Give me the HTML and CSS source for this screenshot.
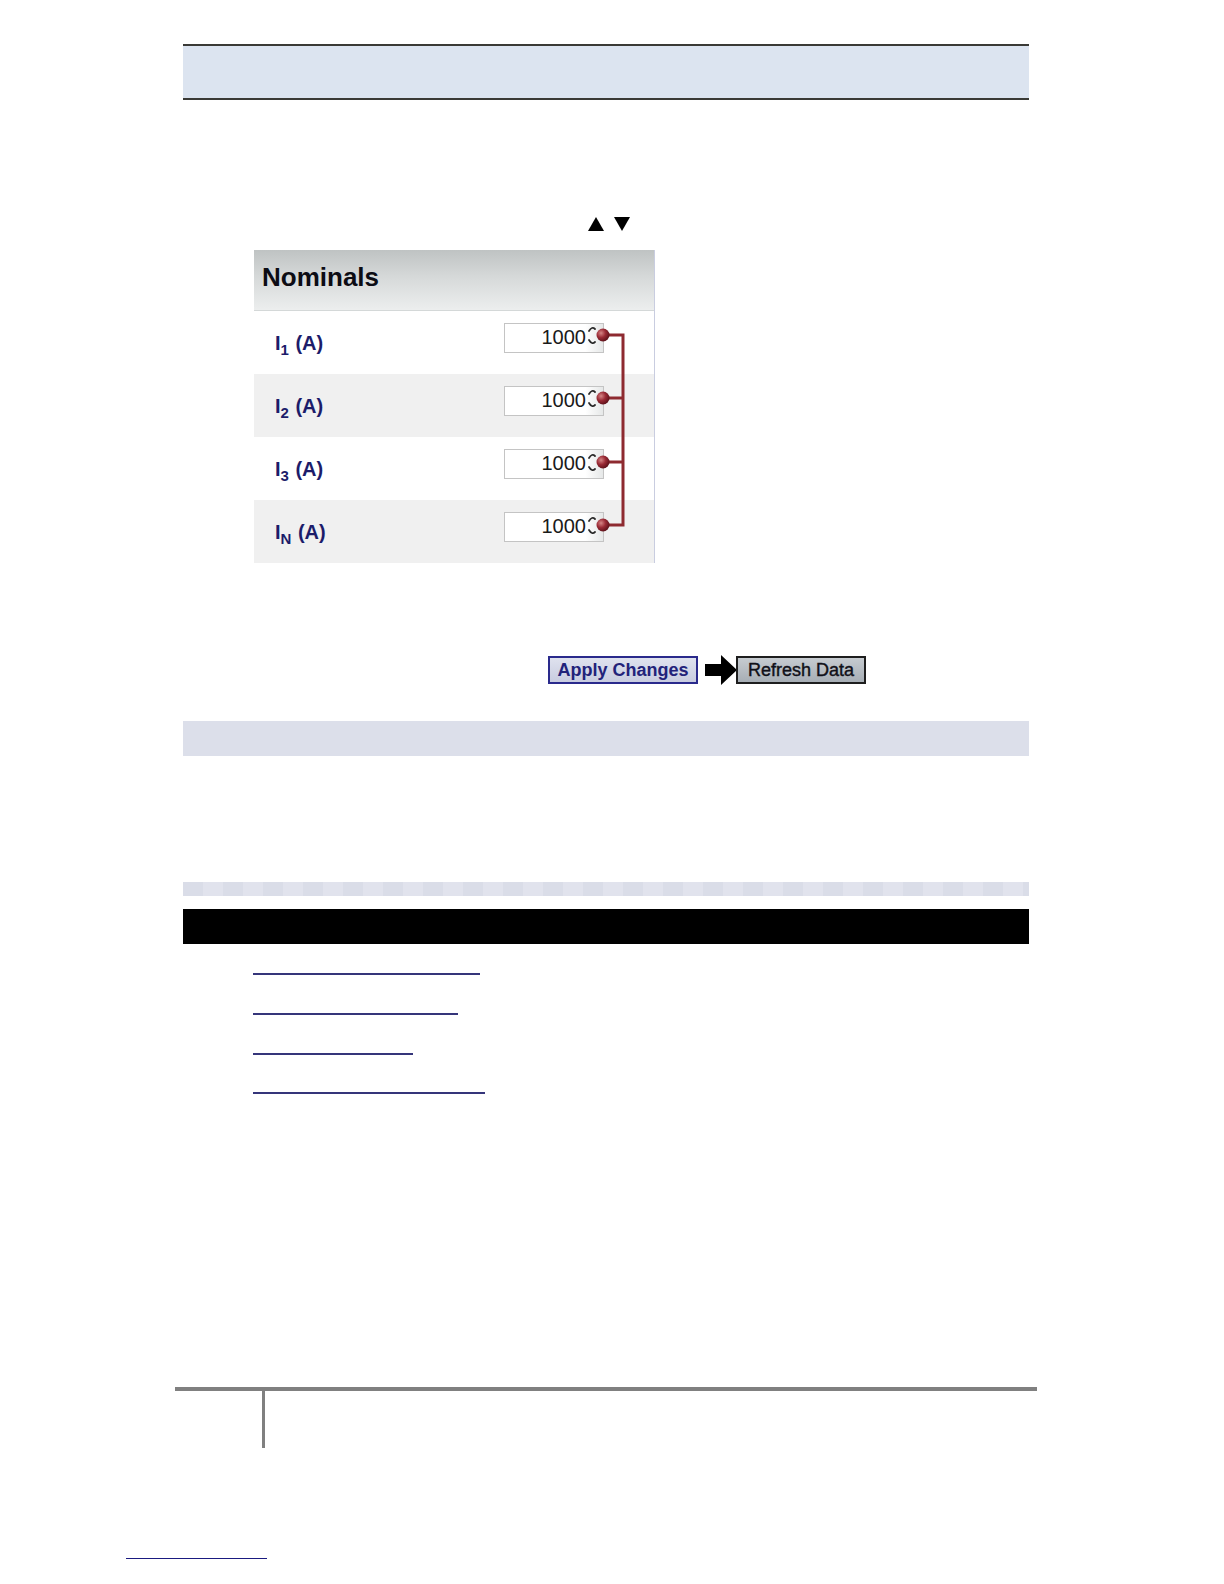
FILE: index.html
```html
<!DOCTYPE html>
<html>
<head>
<meta charset="utf-8">
<link rel="stylesheet" href="styles.css">
</head>
<body>
<div class="page">
  <div class="topbar"></div>
  <div class="sortrow">
    <svg class="tri" width="16" height="14" viewBox="0 0 16 14"><polygon points="8,0 16,14 0,14" fill="#000"/></svg>
    <svg class="tri" width="16" height="14" viewBox="0 0 16 14"><polygon points="0,0 16,0 8,14" fill="#000"/></svg>
  </div>
  <div class="panel">
    <div class="panel-head">Nominals</div>
    <div class="row">
      <div class="label">I<sub>1</sub> (A)</div>
      <div class="field"><span class="val">1000</span></div>
    </div>
    <div class="row alt">
      <div class="label">I<sub>2</sub> (A)</div>
      <div class="field"><span class="val">1000</span></div>
    </div>
    <div class="row">
      <div class="label">I<sub>3</sub> (A)</div>
      <div class="field"><span class="val">1000</span></div>
    </div>
    <div class="row alt">
      <div class="label">I<sub>N</sub> (A)</div>
      <div class="field"><span class="val">1000</span></div>
    </div>
    <svg class="links-overlay" width="401" height="314" viewBox="0 0 401 314">
      <defs>
        <radialGradient id="knob" cx="0.35" cy="0.35" r="0.7">
          <stop offset="0" stop-color="#d58585"/>
          <stop offset="0.5" stop-color="#9a2a35"/>
          <stop offset="1" stop-color="#5a1018"/>
        </radialGradient>
      </defs>
      <g stroke="#8e2a30" stroke-width="3" fill="none">
        <path d="M350 85 H369 V275 H350"/>
        <path d="M350 148 H369"/>
        <path d="M350 212 H369"/>
      </g>
      <g stroke="#2a2a2a" stroke-width="1.8" fill="none" stroke-linecap="round" stroke-linejoin="round">
        <path d="M335 81 Q338 76 341 79"/>
        <path d="M335 90 Q338 95 341 92"/>
        <path d="M335 144 Q338 139 341 142"/>
        <path d="M335 153 Q338 158 341 155"/>
        <path d="M335 208 Q338 203 341 206"/>
        <path d="M335 217 Q338 222 341 219"/>
        <path d="M335 271 Q338 266 341 269"/>
        <path d="M335 280 Q338 285 341 282"/>
      </g>
      <g fill="url(#knob)">
        <circle cx="349" cy="85" r="6.5"/>
        <circle cx="349" cy="148" r="6.5"/>
        <circle cx="349" cy="212" r="6.5"/>
        <circle cx="349" cy="275" r="6.5"/>
      </g>
    </svg>
  </div>
  <div class="actions">
    <button class="btn apply">Apply Changes</button>
    <svg class="arrow" width="32" height="30" viewBox="0 0 32 30"><polygon points="0,9 16,9 16,0 32,15 16,30 16,21 0,21" fill="#000"/></svg>
    <button class="btn refresh">Refresh Data</button>
  </div>
  <div class="bar2"></div>
  <div class="bar3"></div>
  <div class="blackbar"></div>
  <ul class="linklist">
    <li class="l1"></li>
    <li class="l2"></li>
    <li class="l3"></li>
    <li class="l4"></li>
  </ul>
</div>
<footer class="foot">
  <div class="foot-line"></div>
  <div class="foot-stem"></div>
  <div class="foot-note"></div>
</footer>
</body>
</html>
```

FILE: styles.css
```css
html, body {
  margin: 0;
  padding: 0;
  background: #fff;
  font-family: "Liberation Sans", Arial, sans-serif;
}
.page {
  width: 846px;
  margin-left: 183px;
  padding-top: 44px;
}
.topbar {
  height: 52px;
  background: #dce4f0;
  border-top: 2px solid #3a3a36;
  border-bottom: 2px solid #3a3a36;
}
.sortrow {
  margin-top: 117px;
  height: 14px;
  display: flex;
  gap: 10px;
  padding-left: 405px;
}
.tri { display: block; }
.panel {
  position: relative;
  margin-top: 19px;
  margin-left: 71px;
  width: 400px;
  border-right: 1px solid #c9cde0;
  background: #fff;
}
.panel-head {
  height: 60px;
  border-bottom: 1px solid #d4d8d8;
  background: linear-gradient(to bottom, #bfc3c3 0%, #d6d9d9 45%, #eceeee 100%);
  font-weight: bold;
  font-size: 26px;
  color: #0c0c14;
  padding-left: 8px;
  line-height: 54px;
}
.row {
  height: 63px;
  display: flex;
  align-items: center;
  padding-left: 21px;
}
.row.alt { background: #f0f0f0; }
.label {
  width: 229px;
  font-weight: bold;
  font-size: 20px;
  color: #1c1c6a;
  padding-top: 2px;
}
.label sub {
  font-size: 15px;
  vertical-align: -5px;
  line-height: 0;
  margin-right: 1px;
}
.field {
  margin-top: -10px;
  border: 1px solid #c4c4c4;
  background: linear-gradient(to right, #fff 0%, #fff 82%, #e6e8e8 100%);
  display: flex;
  align-items: center;
  justify-content: flex-end;
  padding-right: 17px;
  box-sizing: border-box;
  width: 100px;
  height: 30px;
}
.val {
  font-size: 20px;
  color: #1a1a1a;
}
.links-overlay {
  position: absolute;
  left: 0;
  top: 0;
  pointer-events: none;
}
.actions {
  margin-top: 92px;
  margin-left: 365px;
  display: flex;
  align-items: center;
  height: 30px;
}
.btn {
  font-family: "Liberation Sans", Arial, sans-serif;
  font-weight: bold;
  font-size: 18px;
  height: 28px;
  padding: 0 7px;
  margin: 0;
  box-sizing: border-box;
}
.apply {
  width: 150px;
  color: #22227a;
  border: 2px solid #2a2a8c;
  background: linear-gradient(to bottom, #dfe2ee, #c8cce0);
}
.arrow {
  margin: 0 -1px 0 7px;
  display: block;
}
.refresh {
  width: 130px;
  color: #101018;
  border: 2px solid #1e1e1e;
  background: linear-gradient(to bottom, #c6cbd0, #a7aeb5);
  font-weight: normal;
  -webkit-text-stroke: 0.4px #101018;
}
.bar2 {
  margin-top: 36px;
  height: 35px;
  background: #dcdfea;
}
.bar3 {
  margin-top: 126px;
  height: 14px;
  background: repeating-linear-gradient(to right, #dadde8 0, #dadde8 20px, #e1e3ed 20px, #e1e3ed 40px);
}
.blackbar {
  margin-top: 13px;
  height: 35px;
  background: #000;
}
.linklist {
  list-style: none;
  margin: 0;
  padding: 0 0 0 70px;
}
.linklist li {
  height: 38px;
  border-bottom: 2px solid #35357a;
}
.linklist li.l1 { width: 227px; height: 29px; }
.linklist li.l2 { width: 205px; }
.linklist li.l3 { width: 160px; }
.linklist li.l4 { width: 232px; height: 37px; }
.foot {
  margin-top: 293px;
}
.foot-line {
  margin-left: 175px;
  width: 862px;
  height: 4px;
  background: #808080;
}
.foot-stem {
  margin-left: 262px;
  width: 3px;
  height: 57px;
  background: #808080;
}
.foot-note {
  margin-top: 109px;
  margin-left: 126px;
  width: 141px;
  height: 1px;
  border-bottom: 1px solid #1a1a80;
}
```
